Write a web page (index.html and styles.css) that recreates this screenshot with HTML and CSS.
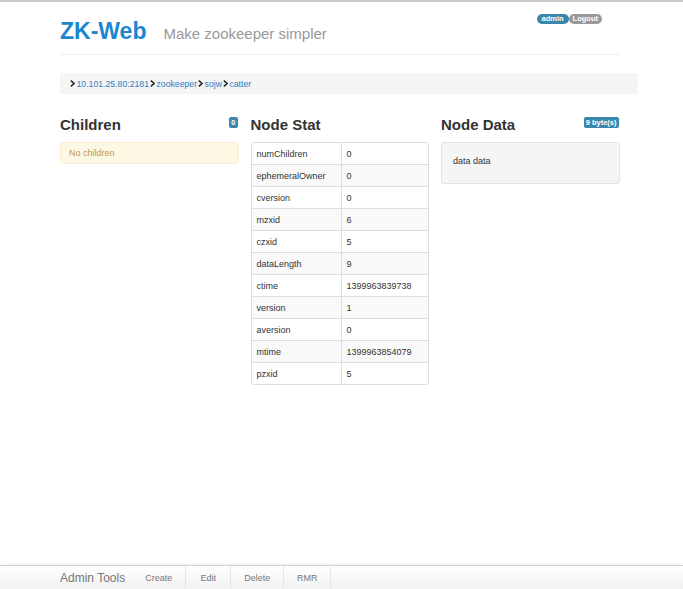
FILE: index.html
```html
<!DOCTYPE html>
<html>
<head>
<meta charset="utf-8">
<link rel="stylesheet" href="styles.css">
</head>
<body>
<div class="topline"></div>
<div class="container">
  <div class="header">
    <div class="brand">
      <span class="title">ZK-Web</span>
      <span class="subtitle">Make zookeeper simpler</span>
    </div>
    <div class="user">
      <span class="pill pill-info">admin</span><span class="pill pill-gray">Logout</span>
    </div>
  </div>
  <div class="crumbs">
    <span class="crumb"><svg class="chev" viewBox="0 0 6 8"><path d="M1 0.5 L5 4 L1 7.5" fill="none" stroke="#222" stroke-width="1.8"/></svg><a>10.101.25.80:2181</a></span>
    <span class="crumb"><svg class="chev" viewBox="0 0 6 8"><path d="M1 0.5 L5 4 L1 7.5" fill="none" stroke="#222" stroke-width="1.8"/></svg><a>zookeeper</a></span>
    <span class="crumb"><svg class="chev" viewBox="0 0 6 8"><path d="M1 0.5 L5 4 L1 7.5" fill="none" stroke="#222" stroke-width="1.8"/></svg><a>sojw</a></span>
    <span class="crumb"><svg class="chev" viewBox="0 0 6 8"><path d="M1 0.5 L5 4 L1 7.5" fill="none" stroke="#222" stroke-width="1.8"/></svg><a>catter</a></span>
  </div>
  <div class="cols">
    <div class="col">
      <div class="col-head"><h2>Children</h2><span class="badge">0</span></div>
      <div class="alert">No children</div>
    </div>
    <div class="col">
      <div class="col-head"><h2>Node Stat</h2></div>
      <table class="stat">
        <tr><td>numChildren</td><td>0</td></tr>
        <tr><td>ephemeralOwner</td><td>0</td></tr>
        <tr><td>cversion</td><td>0</td></tr>
        <tr><td>mzxid</td><td>6</td></tr>
        <tr><td>czxid</td><td>5</td></tr>
        <tr><td>dataLength</td><td>9</td></tr>
        <tr><td>ctime</td><td>1399963839738</td></tr>
        <tr><td>version</td><td>1</td></tr>
        <tr><td>aversion</td><td>0</td></tr>
        <tr><td>mtime</td><td>1399963854079</td></tr>
        <tr><td>pzxid</td><td>5</td></tr>
      </table>
    </div>
    <div class="col">
      <div class="col-head"><h2>Node Data</h2><span class="badge">9 byte(s)</span></div>
      <div class="well">data data</div>
    </div>
  </div>
</div>
<div class="navbar">
  <div class="nav-inner">
    <span class="nav-brand">Admin Tools</span>
    <a class="nav-link">Create</a>
    <a class="nav-link">Edit</a>
    <a class="nav-link">Delete</a>
    <a class="nav-link">RMR</a>
  </div>
</div>
</body>
</html>
```
FILE: styles.css
```css
html, body {
  margin: 0;
  padding: 0;
  height: 100%;
}
body {
  font-family: "Liberation Sans", Arial, sans-serif;
  font-size: 9px;
  color: #333;
  background: #fff;
  position: relative;
  overflow: hidden;
}
.topline {
  height: 2px;
  background: #c8c8c8;
}
.container {
  margin-left: 60px;
  width: 560px;
}
.header {
  display: flex;
  justify-content: space-between;
  align-items: flex-start;
  height: 52px;
  border-bottom: 1px solid #eee;
}
.brand {
  padding-top: 16px;
  display: flex;
  align-items: baseline;
}
.title {
  font-size: 23px;
  font-weight: bold;
  color: #1b87cf;
}
.subtitle {
  font-size: 15px;
  color: #999;
  margin-left: 17px;
}
.user {
  padding-top: 12px;
  margin-right: 18px;
  display: flex;
}
.pill {
  display: inline-block;
  font-size: 7.5px;
  font-weight: bold;
  color: #fff;
  line-height: 10px;
  padding: 0 4px;
  border-radius: 6px;
}
.pill-info { background: #3a87ad; padding: 0 5px; }
.pill-gray { background: #999; }
.crumbs {
  margin-top: 18px;
  height: 21px;
  background: #f5f5f5;
  border-radius: 2px;
  display: flex;
  align-items: center;
  padding-left: 10px;
  box-sizing: border-box;
  width: 578px;
  font-size: 8.7px;
}
.crumb {
  display: inline-flex;
  align-items: center;
  margin-right: 1px;
}
.chev {
  width: 5px;
  height: 7px;
  margin-right: 1.5px;
}
.crumb a {
  color: #2a7fc4;
}
.cols {
  display: flex;
  gap: 12px;
  margin-top: 16px;
}
.col {
  width: 178.5px;
}
.col-head {
  display: flex;
  justify-content: space-between;
  align-items: flex-start;
  height: 27px;
  padding-top: 5px;
}
h2 {
  margin: 0;
  font-size: 15px;
  font-weight: bold;
  color: #333;
  line-height: 20px;
}
.badge {
  margin-top: 2px;
  margin-right: 1px;
  background: #3a87ad;
  color: #fff;
  font-size: 7.5px;
  font-weight: bold;
  line-height: 11px;
  padding: 0 2px;
  border-radius: 2px;
}
.alert {
  background: #fcf8e3;
  border: 1px solid #fbeed5;
  color: #c09853;
  border-radius: 3px;
  height: 22px;
  box-sizing: border-box;
  padding-left: 8px;
  display: flex;
  align-items: center;
}
table.stat {
  width: 100%;
  border-collapse: separate;
  border-spacing: 0;
  border: 1px solid #ddd;
  border-radius: 3px;
}
table.stat td {
  height: 21px;
  padding: 0 0 0 5px;
  border-top: 1px solid #ddd;
  color: #333;
}
table.stat tr:first-child td {
  border-top: none;
}
table.stat td:first-child {
  width: 84px;
  border-right: 1px solid #ddd;
}
table.stat tr:nth-child(even) td {
  background: #f9f9f9;
}
.well {
  background: #f5f5f5;
  border: 1px solid #e3e3e3;
  border-radius: 3px;
  height: 42px;
  box-sizing: border-box;
  padding: 13px 0 0 11px;
}
.navbar {
  position: absolute;
  left: 0;
  right: 0;
  bottom: 0;
  height: 23px;
  border-top: 1px solid #d4d4d4;
  background: linear-gradient(#ffffff, #f2f2f2);
  box-shadow: 0 -1px 3px rgba(0,0,0,0.06);
}
.nav-inner {
  margin-left: 60px;
  display: flex;
  height: 23px;
  align-items: stretch;
}
.nav-brand {
  font-size: 12px;
  color: #777;
  display: flex;
  align-items: center;
  padding-right: 20px;
}
.nav-link {
  display: flex;
  align-items: center;
  justify-content: center;
  color: #777;
  font-size: 9px;
  border-right: 1px solid #e6e6e6;
}
.nav-link:nth-of-type(1) { width: 40px; justify-content: flex-start; }
.nav-link:nth-of-type(2) { width: 44px; }
.nav-link:nth-of-type(3) { width: 52px; }
.nav-link:nth-of-type(4) { width: 46px; }
```
